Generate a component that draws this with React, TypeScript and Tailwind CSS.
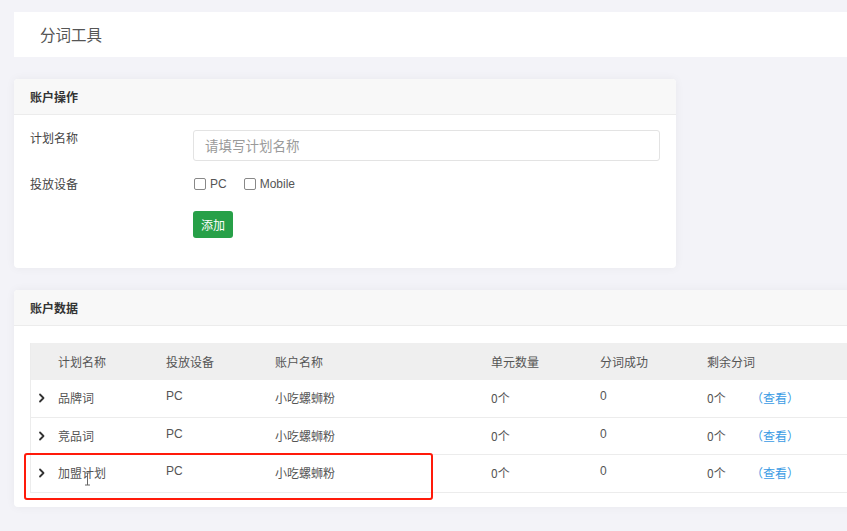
import React from "react";

const font = { fontFamily: '"Noto Sans CJK SC", "Liberation Sans", sans-serif' };

function Chevron() {
  return (
    <svg width="8" height="10" viewBox="0 0 8 10" className="block">
      <path d="M2 1.5 L5.5 5 L2 8.5" fill="none" stroke="#333" strokeWidth="1.8" strokeLinecap="round" strokeLinejoin="round" />
    </svg>
  );
}

const rows = ["品牌词", "竞品词", "加盟计划"];

export default function App() {
  return (
    <div className="relative w-[847px] h-[531px] overflow-hidden bg-[#f3f3f8]" style={font}>
      <div className="w-[900px] pl-[14px] pt-[12px] flex flex-col">
        {/* title bar */}
        <div className="h-[45px] bg-white flex items-center pl-[26px] text-[15.5px] text-[#555]">分词工具</div>

        {/* card 1 */}
        <div className="mt-[22px] w-[662px] h-[189px] bg-white rounded-[4px] shadow-[0_0_10px_rgba(0,0,0,0.05)] flex flex-col">
          <div className="h-[36px] bg-[#f8f8f8] border-b border-[#ececec] rounded-t-[4px] flex items-center pl-[16px] text-[12px] font-bold text-[#333]">账户操作</div>
          <div className="pl-[16px] pr-[16px] pt-[15px] flex flex-col">
            <div className="flex items-start">
              <div className="w-[163px] pt-[0px] text-[12px] text-[#444] leading-[16px]">计划名称</div>
              <div className="flex-1 h-[31px] border border-[#e3e3e3] rounded-[3px] flex items-center pl-[11px] text-[13.5px] text-[#9a9a9a]">请填写计划名称</div>
            </div>
            <div className="flex items-center mt-[14px] h-[18px]">
              <div className="w-[164px] text-[12px] text-[#444]">投放设备</div>
              <div className="flex items-center text-[12px] text-[#555]" style={{ fontFamily: '"Liberation Sans", sans-serif' }}>
                <span className="w-[12px] h-[12px] border border-[#888] rounded-[2px] bg-white"></span>
                <span className="ml-[4px]">PC</span>
                <span className="ml-[17px] w-[12px] h-[12px] border border-[#888] rounded-[2px] bg-white"></span>
                <span className="ml-[4px]">Mobile</span>
              </div>
            </div>
            <div className="flex mt-[18px]">
              <div className="w-[163px]"></div>
              <div className="w-[40px] h-[27px] bg-[#27a048] rounded-[3px] flex items-center justify-center text-[12px] text-white">添加</div>
            </div>
          </div>
        </div>

        {/* card 2 */}
        <div className="mt-[22px] h-[217px] bg-white rounded-[4px] shadow-[0_0_10px_rgba(0,0,0,0.05)] flex flex-col">
          <div className="h-[36px] bg-[#f8f8f8] border-b border-[#ececec] rounded-t-[4px] flex items-center pl-[16px] text-[12px] font-bold text-[#333]">账户数据</div>
          <div className="pl-[16px] pt-[17px]">
            <div className="border-l border-[#ececec] text-[12px] text-[#555]">
              <div className="h-[37px] bg-[#efefef] flex items-center">
                <div className="w-[27px]"></div>
                <div className="w-[108px]">计划名称</div>
                <div className="w-[109px]">投放设备</div>
                <div className="w-[216px]">账户名称</div>
                <div className="w-[109px]">单元数量</div>
                <div className="w-[107px]">分词成功</div>
                <div className="w-[100px]">剩余分词</div>
              </div>
              {rows.map((r) => (
                <div key={r} className="h-[37.5px] border-b border-[#ececec] flex items-center">
                  <div className="w-[27px] pl-[7px]"><Chevron /></div>
                  <div className="w-[108px]">{r}</div>
                  <div className="w-[109px] -mt-[4px]" style={{ fontFamily: '"Liberation Sans", sans-serif' }}>PC</div>
                  <div className="w-[216px]">小吃螺蛳粉</div>
                  <div className="w-[109px]">0个</div>
                  <div className="w-[107px] -mt-[4px]" style={{ fontFamily: '"Liberation Sans", sans-serif' }}>0</div>
                  <div className="w-[44px]">0个</div>
                  <div className="text-[#3a9be4]">（查看）</div>
                </div>
              ))}
            </div>
          </div>
        </div>
      </div>

      {/* annotation box */}
      <div className="absolute left-[24px] top-[453px] w-[409px] h-[47px] border-[2.5px] border-[#ff1a0a] rounded-[3px]"></div>
      {/* text cursor */}
      <svg className="absolute left-[84px] top-[472px]" width="7" height="14" viewBox="0 0 7 14">
        <path d="M1 1 H6 M3.5 1 V13 M1 13 H6" stroke="#666" strokeWidth="1" fill="none" />
      </svg>
    </div>
  );
}
